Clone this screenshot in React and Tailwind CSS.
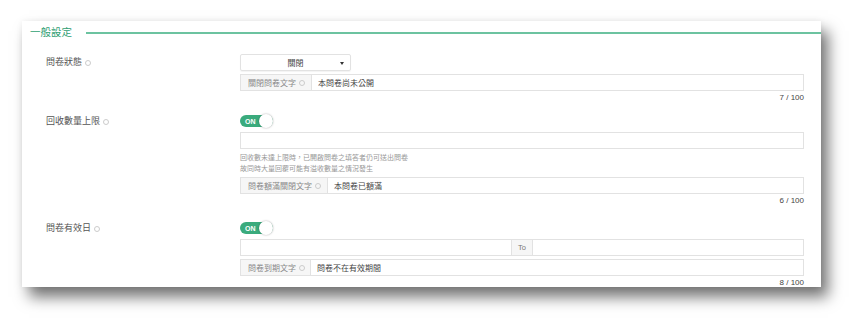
import React from "react";

const font = { fontFamily: '"Noto Sans CJK TC", "Noto Sans", sans-serif' };

function Info() {
  return (
    <span className="inline-block w-[6px] h-[6px] rounded-full border border-[#ccc] ml-[3px] align-middle"></span>
  );
}

function Toggle() {
  return (
    <div className="relative w-[33px] h-[12px] rounded-full bg-[#3aab7d] flex items-center">
      <span className="text-white text-[7px] font-bold leading-none ml-[5px] tracking-wide" style={{ fontFamily: '"Liberation Sans", sans-serif' }}>ON</span>
      <span className="absolute right-0 top-[-1px] w-[14px] h-[14px] rounded-full bg-white shadow-[0_0_2px_rgba(0,0,0,0.35)]"></span>
    </div>
  );
}

function Group({ label, value, addonW }) {
  return (
    <div className="flex h-[17px] border border-[#e2e2e2] bg-white">
      <div className={`${addonW} shrink-0 bg-[#f6f6f6] border-r border-[#e2e2e2] flex items-center pl-[7px] text-[8px] text-[#888]`}>
        {label}
        <Info />
      </div>
      <div className="flex-1 flex items-center pl-[6px] text-[8px] text-[#444]">{value}</div>
    </div>
  );
}

function Count({ t }) {
  return (
    <div className="text-right text-[8px] text-[#444] leading-none mt-[3px]" style={{ fontFamily: '"Liberation Sans", sans-serif' }}>{t}</div>
  );
}

export default function App() {
  return (
    <div className="w-[863px] h-[330px] bg-white overflow-hidden pt-[21px] pl-[22px]" style={font}>
      <div className="w-[799px] h-[266px] bg-white shadow-[7px_10px_14px_rgba(0,0,0,0.55),0_0_6px_rgba(0,0,0,0.06)] relative">
        {/* header */}
        <div className="flex items-center h-[22px] pt-[1px]">
          <span className="ml-[8px] text-[10.5px] text-[#2f9e72] leading-none">一般設定</span>
          <div className="ml-[14px] flex-1 h-[2px] bg-[#6cc3a0]"></div>
        </div>

        {/* row 1 */}
        <div className="flex mt-[11px] pr-[17px]">
          <div className="w-[218px] shrink-0 pl-[24px] pt-[2px] text-[9px] text-[#555] leading-[12px]">問卷狀態<Info /></div>
          <div className="flex-1">
            <div className="w-[111px] h-[17px] border border-[#e2e2e2] rounded-[2px] flex items-center justify-center relative text-[8px] text-[#444] shadow-[0_1px_1px_rgba(0,0,0,0.05)]">
              關閉
              <span className="absolute right-[6px] top-[7px] w-0 h-0 border-l-[2.5px] border-r-[2.5px] border-t-[3px] border-l-transparent border-r-transparent border-t-[#333]"></span>
            </div>
            <div className="mt-[3px]">
              <Group label="關閉問卷文字" value="本問卷尚未公開" addonW="w-[71px]" />
            </div>
            <Count t="7 / 100" />
          </div>
        </div>

        {/* row 2 */}
        <div className="flex mt-[13px] pr-[17px]">
          <div className="w-[218px] shrink-0 pl-[24px] text-[9px] text-[#555] leading-[12px]">回收數量上限<Info /></div>
          <div className="flex-1">
            <Toggle />
            <div className="mt-[5px] h-[17px] border border-[#e2e2e2]"></div>
            <div className="mt-[3px] text-[7px] text-[#999] leading-[11px]">
              <div>回收數未達上限時，已開啟問卷之填答者仍可送出問卷</div>
              <div>故同時大量回覆可能有溢收數量之情況發生</div>
            </div>
            <div className="mt-[3px]">
              <Group label="問卷額滿關閉文字" value="本問卷已額滿" addonW="w-[87px]" />
            </div>
            <Count t="6 / 100" />
          </div>
        </div>

        {/* row 3 */}
        <div className="flex mt-[17px] pr-[17px]">
          <div className="w-[218px] shrink-0 pl-[24px] text-[9px] text-[#555] leading-[12px]">問卷有效日<Info /></div>
          <div className="flex-1">
            <Toggle />
            <div className="mt-[5px] h-[17px] border border-[#e2e2e2] flex">
              <div className="w-[270px]"></div>
              <div className="w-[22px] bg-[#f6f6f6] border-l border-r border-[#e2e2e2] flex items-center justify-center text-[7.5px] text-[#777]" style={{ fontFamily: '"Liberation Sans", sans-serif' }}>To</div>
              <div className="flex-1"></div>
            </div>
            <div className="mt-[3px]">
              <Group label="問卷到期文字" value="問卷不在有效期間" addonW="w-[70px]" />
            </div>
            <Count t="8 / 100" />
          </div>
        </div>
      </div>
    </div>
  );
}
